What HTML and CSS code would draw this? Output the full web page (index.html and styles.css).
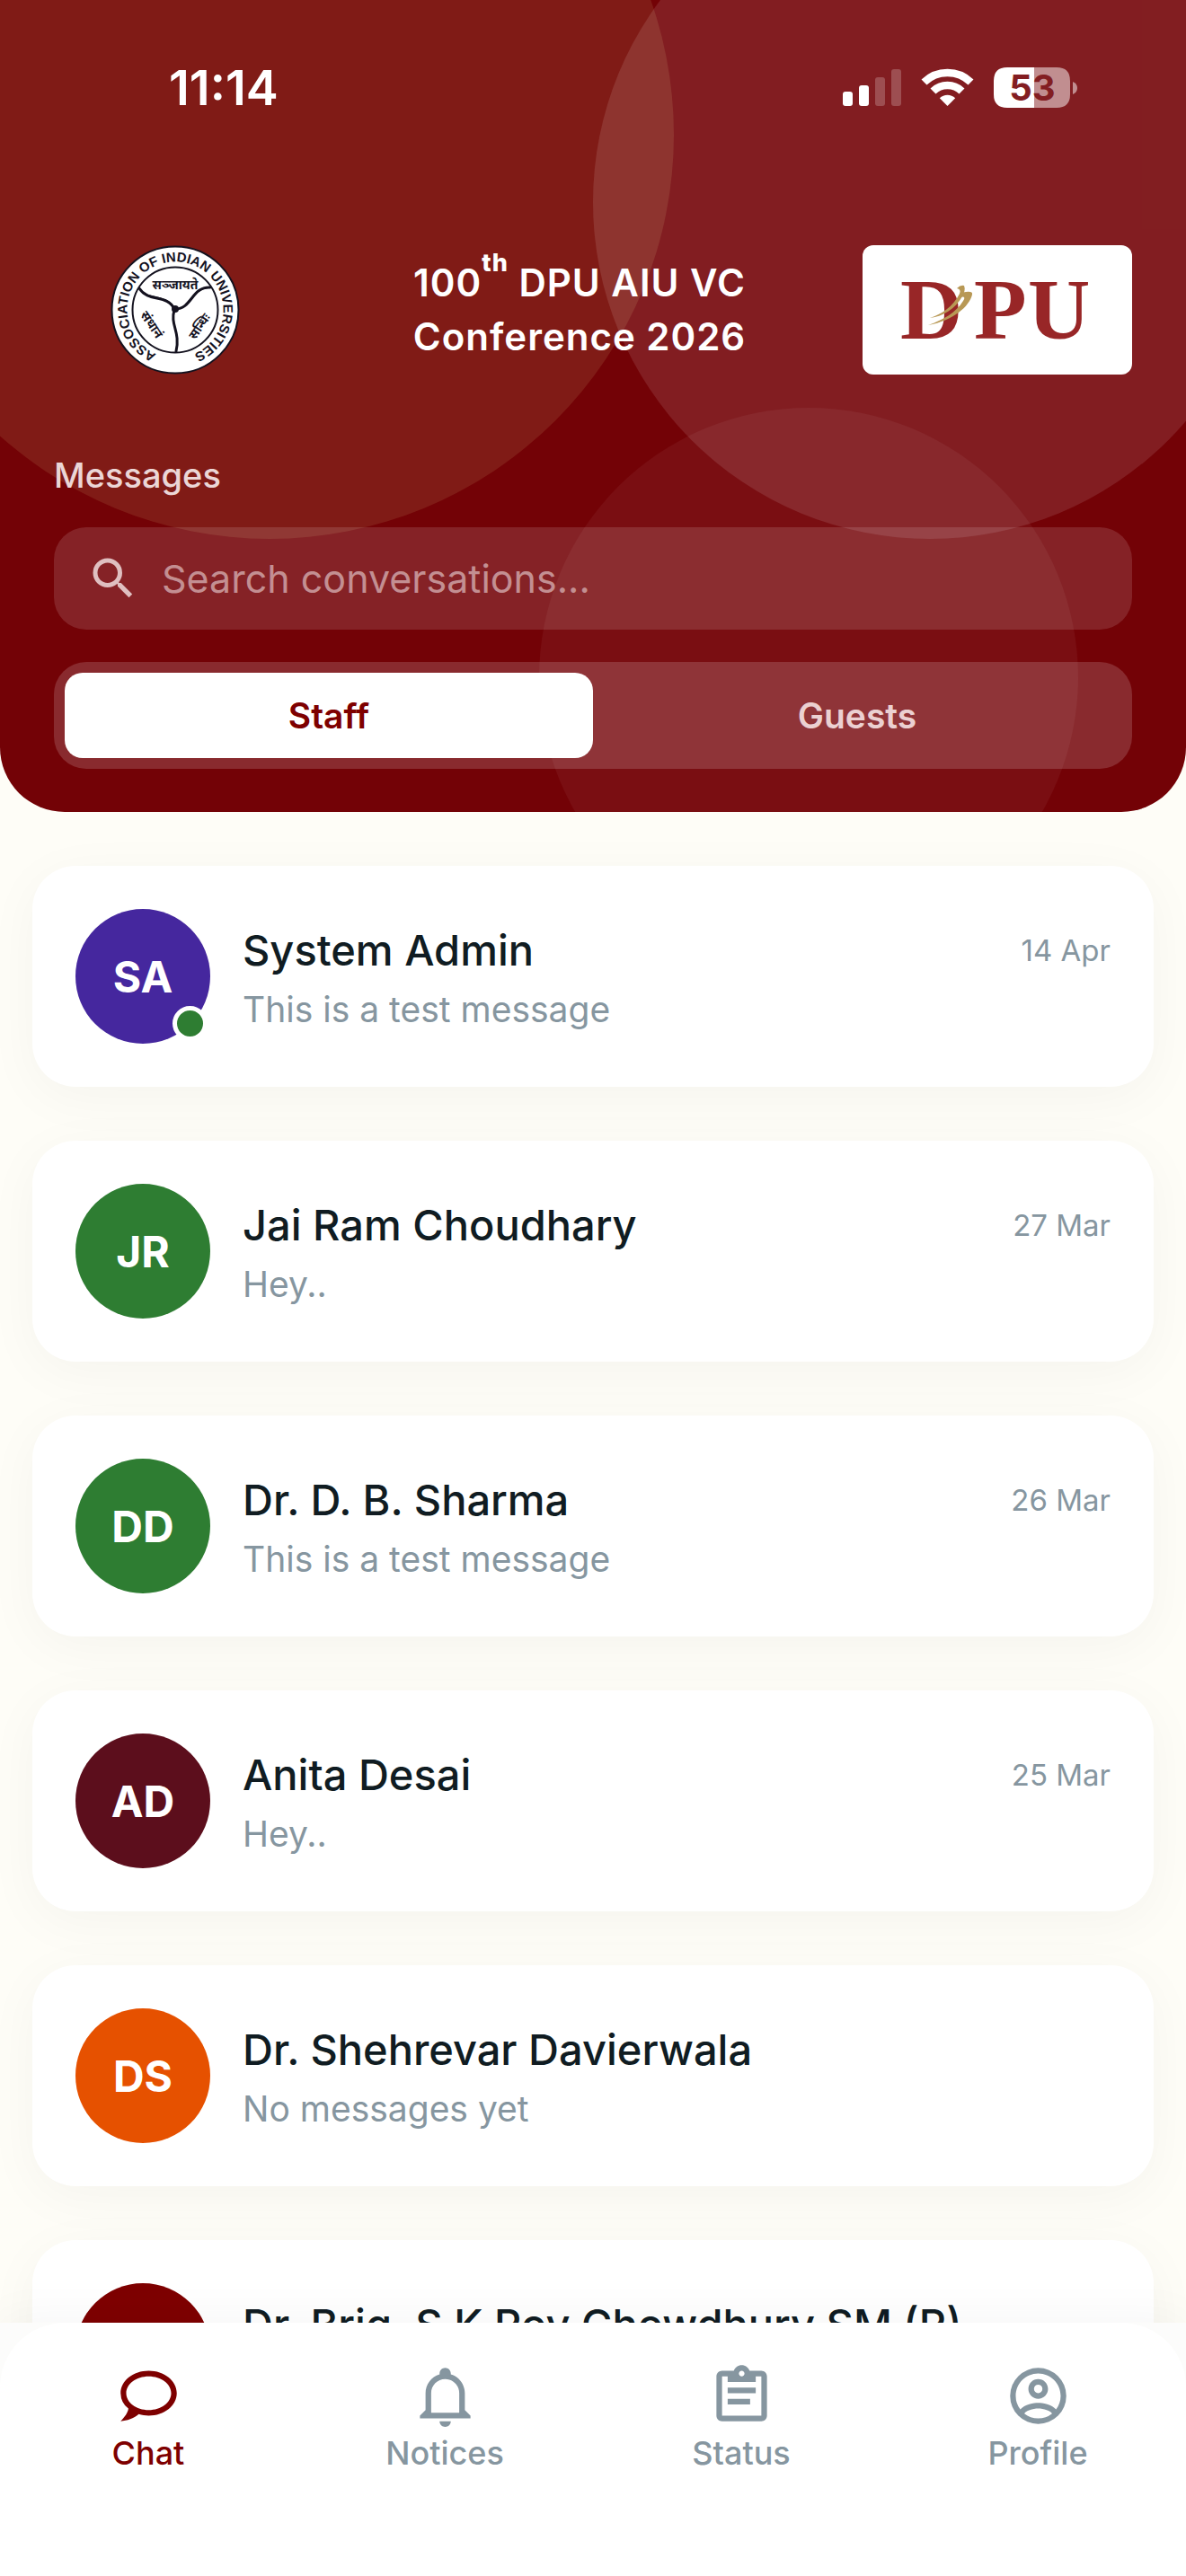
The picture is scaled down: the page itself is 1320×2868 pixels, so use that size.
FILE: index.html
```
<!DOCTYPE html>
<html lang="en">

<head>
    <meta charset="UTF-8">
    <meta name="viewport" content="width=device-width, initial-scale=1.0">
    <title>Messages</title>
    <link rel="stylesheet" href="styles.css">
</head>

<body>
    <header class="header">
        <div class="circle circle-left"></div>
        <div class="circle circle-right"></div>
        <div class="circle circle-bottom"></div>

        <div class="status-bar">
            <span class="time">11:14</span>
            <svg class="status-icons" width="262" height="46" viewBox="0 0 262 46" aria-hidden="true">
                <g fill="#fff">
                    <rect x="0" y="27" width="11" height="16" rx="3" />
                    <rect x="18" y="20" width="11" height="23" rx="3" />
                    <rect x="36" y="11" width="11" height="32" rx="3" opacity=".22" />
                    <rect x="54" y="2" width="11" height="41" rx="3" opacity=".22" />
                </g>
                <g fill="none" stroke="#fff" stroke-width="8.6">
                    <path d="M90.500 16.500a37.500 37.500 0 0 1 52 0" />
                    <path d="M100.500 26.500a23 23 0 0 1 32 0" />
                </g>
                <path d="M107.800 34.200a12.500 12.500 0 0 1 17.400 0L116.500 43z" fill="#fff" />
                <path d="M183 0h30v45h-30q-15 0-15-15V15q0-15 15-15z" fill="#fff" />
                <path d="M213 0h25q15 0 15 15v15q0 15-15 15h-25z" fill="#fff" opacity=".5" />
                <path d="M256 16q5 2 5 7t-5 7z" fill="#fff" opacity=".5" />
                <text class="battery-text" x="211" y="37" text-anchor="middle">53</text>
            </svg>
        </div>

        <div class="brand">
            <div class="brand-left">
                <svg class="emblem" viewBox="0 0 144 144" role="img" aria-label="Association of Indian Universities">
                    <circle cx="72" cy="72" r="70.500" fill="#fff" stroke="#14121f" stroke-width="2" />
                    <circle cx="72" cy="72" r="47.500" fill="none" stroke="#14121f" stroke-width="2" />
                    <path id="ring-path" d="M58 123.500A53.500 53.500 0 1 1 86 123.500" fill="none" />
                    <text class="ring-text"><textPath href="#ring-path" startOffset="50%" text-anchor="middle">ASSOCIATION OF INDIAN UNIVERSITIES</textPath></text>
                    <g class="motto" text-anchor="middle">
                        <text x="72" y="49">सञ्जायते</text>
                        <text transform="translate(42 91) rotate(56)">संधानं</text>
                        <text transform="translate(103 93) rotate(-56)">सन्धिः</text>
                    </g>
                    <g fill="none" stroke="#14121f" stroke-linecap="round">
                        <path d="M32 48C42 64 63 54 71 71" stroke-width="3" />
                        <path d="M36 53C46 60 63 56 71 71" stroke-width="2" />
                        <path d="M72 71C91 71 90 46 111 47" stroke-width="3" />
                        <path d="M84 66C93 57 97 48 108 47" stroke-width="2" />
                        <path d="M71 72C66 89 78 96 73 118" stroke-width="3" />
                    </g>
                    <circle cx="72" cy="71" r="4" fill="#14121f" />
                </svg>
            </div>
            <h1 class="title">100<sup>th</sup> DPU AIU VC<br>Conference 2026</h1>
            <div class="brand-right">
                <svg width="300" height="144" viewBox="0 0 300 144" role="img" aria-label="DPU">
                    <text class="dpu-text" x="42 124 184" y="104">DPU</text>
                    <g fill="#b89855">
                        <path d="M75 81C88 77 101 68 108 54Q110 49 105 48Q109 44 113 45Q115 50 111 57C103 71 90 79 75 81z" />
                        <path d="M73 89C90 83 104 75 112 62Q116 56 108 58Q108 52 115 52Q123 51 122 55C119 68 101 84 73 89z" />
                    </g>
                </svg>
            </div>
        </div>

        <p class="section-name">Messages</p>

        <label class="search">
            <svg width="60" height="60" viewBox="0 0 24 24" aria-hidden="true">
                <path d="M15.500 14h-.79l-.28-.27A6.470 6.470 0 0 0 16 9.500 6.500 6.500 0 1 0 9.500 16c1.610 0 3.090-.59 4.230-1.570l.27.28v.79l5 4.990L20.490 19l-4.990-5zm-6 0C7.010 14 5 11.990 5 9.500S7.010 5 9.500 5 14 7.010 14 9.500 11.990 14 9.500 14z" />
            </svg>
            <input type="search" placeholder="Search conversations..." aria-label="Search conversations">
        </label>

        <div class="tabs">
            <button class="tab active" type="button">Staff</button>
            <button class="tab" type="button">Guests</button>
        </div>
    </header>

    <main class="list">
        <a class="card" href="#">
            <span class="avatar purple">SA<span class="online"></span></span>
            <div class="info">
                <div class="row">
                    <h2>System Admin</h2>
                    <time>14 Apr</time>
                </div>
                <p>This is a test message</p>
            </div>
        </a>
        <a class="card" href="#">
            <span class="avatar green">JR</span>
            <div class="info">
                <div class="row">
                    <h2>Jai Ram Choudhary</h2>
                    <time>27 Mar</time>
                </div>
                <p>Hey..</p>
            </div>
        </a>
        <a class="card" href="#">
            <span class="avatar green">DD</span>
            <div class="info">
                <div class="row">
                    <h2>Dr. D. B. Sharma</h2>
                    <time>26 Mar</time>
                </div>
                <p>This is a test message</p>
            </div>
        </a>
        <a class="card" href="#">
            <span class="avatar wine">AD</span>
            <div class="info">
                <div class="row">
                    <h2>Anita Desai</h2>
                    <time>25 Mar</time>
                </div>
                <p>Hey..</p>
            </div>
        </a>
        <a class="card" href="#">
            <span class="avatar orange">DS</span>
            <div class="info">
                <div class="row">
                    <h2>Dr. Shehrevar Davierwala</h2>
                </div>
                <p>No messages yet</p>
            </div>
        </a>
        <a class="card" href="#">
            <span class="avatar red"></span>
            <div class="info">
                <div class="row">
                    <h2>Dr. Brig. S K Roy Chowdhury SM (R)</h2>
                </div>
            </div>
        </a>
    </main>

    <div class="nav-wrap">
        <nav class="nav">
            <a class="nav-item active" href="#">
                <svg viewBox="0 0 24 24" aria-hidden="true">
                    <path d="M12 3C6.500 3 2 6.580 2 11a7.220 7.220 0 0 0 2.750 5.500c0 .6-.42 2.170-2.750 4.500 2.370-.11 4.640-1 6.470-2.500 1.140.33 2.340.5 3.530.5 5.500 0 10-3.580 10-8s-4.500-8-10-8m0 14c-4.420 0-8-2.690-8-6s3.580-6 8-6 8 2.690 8 6-3.580 6-8 6z" />
                </svg>
                <span>Chat</span>
            </a>
            <a class="nav-item" href="#">
                <svg viewBox="0 0 24 24" aria-hidden="true">
                    <path d="M10 21h4c0 1.100-.9 2-2 2s-2-.9-2-2m11-2v1H3v-1l2-2v-6c0-3.100 2.030-5.830 5-6.710V4c0-1.100.9-2 2-2s2 .9 2 2v.29c2.970.88 5 3.610 5 6.710v6l2 2m-4-8c0-2.760-2.240-5-5-5s-5 2.240-5 5v7h10v-7z" />
                </svg>
                <span>Notices</span>
            </a>
            <a class="nav-item" href="#">
                <svg viewBox="0 0 24 24" aria-hidden="true">
                    <path d="M19 3h-4.180C14.400 1.840 13.300 1 12 1s-2.400.84-2.820 2H5c-1.100 0-2 .9-2 2v14c0 1.100.9 2 2 2h14c1.100 0 2-.9 2-2V5c0-1.100-.9-2-2-2m-7 0c.55 0 1 .45 1 1s-.45 1-1 1-1-.45-1-1 .45-1 1-1M7 7h10V5h2v14H5V5h2v2m10 4H7V9h10v2m-2 4H7v-2h8v2z" />
                </svg>
                <span>Status</span>
            </a>
            <a class="nav-item" href="#">
                <svg viewBox="0 0 24 24" aria-hidden="true">
                    <path d="M12 2A10 10 0 0 0 2 12a10 10 0 0 0 10 10 10 10 0 0 0 10-10A10 10 0 0 0 12 2M7.070 18.280c.43-.9 3.050-1.780 4.930-1.780s4.500.88 4.930 1.780A7.893 7.893 0 0 1 12 20c-1.860 0-3.570-.64-4.930-1.720m11.290-1.450c-1.430-1.740-4.900-2.330-6.360-2.330s-4.930.59-6.360 2.330A7.928 7.928 0 0 1 4 12c0-4.410 3.590-8 8-8s8 3.590 8 8c0 1.820-.62 3.500-1.640 4.830M12 6c-1.940 0-3.500 1.560-3.500 3.500S10.060 13 12 13s3.500-1.560 3.500-3.500S13.940 6 12 6m0 5a1.500 1.500 0 0 1-1.500-1.500A1.500 1.500 0 0 1 12 8a1.500 1.500 0 0 1 1.500 1.500A1.500 1.500 0 0 1 12 11z" />
                </svg>
                <span>Profile</span>
            </a>
        </nav>
    </div>
</body>

</html>
```

FILE: styles.css
```
* {
    box-sizing: border-box;
}

body {
    display: flex;
    flex-direction: column;
    height: 100vh;
    margin: 0;
    background: #fefdf7;
    color: #101c22;
    font-family: Inter, "Liberation Sans", sans-serif;
}

h1,
h2,
p {
    margin: 0;
}

a {
    color: inherit;
    text-decoration: none;
}

/* header */
.header {
    position: relative;
    flex: none;
    overflow: hidden;
    padding: 72px 60px 48px;
    border-radius: 0 0 72px 72px;
    background: #730206;
}

.header > div,
.header > p,
.header > label {
    position: relative;
}

.header > .circle {
    position: absolute;
    border-radius: 50%;
}

.circle-left {
    top: -300px;
    left: -150px;
    width: 900px;
    height: 900px;
    background: rgba(208, 175, 113, 0.15);
}

.circle-right {
    top: -150px;
    right: -90px;
    width: 750px;
    height: 750px;
    background: rgba(255, 255, 255, 0.11);
}

.circle-bottom {
    top: 454px;
    right: 120px;
    width: 600px;
    height: 600px;
    background: rgba(255, 255, 255, 0.05);
}

.status-bar {
    display: flex;
    justify-content: space-between;
    align-items: center;
    padding: 0 60px 0 128px;
}

.time {
    color: #fff;
    font-size: 54px;
    font-weight: 600;
    line-height: 52px;
}

.battery-text {
    fill: #831e22;
    font-size: 40px;
    font-weight: 700;
}

.brand {
    display: flex;
    align-items: center;
    margin-top: 149px;
}

.brand-left {
    display: flex;
    flex: none;
    justify-content: center;
    width: 270px;
}

.emblem {
    width: 144px;
    height: 144px;
}

.ring-text {
    fill: #14121f;
    font-size: 15px;
    font-weight: 700;
    font-family: "Liberation Sans", sans-serif;
}

.motto {
    fill: #14121f;
    font-size: 14px;
    font-weight: 700;
    font-family: "Noto Sans", sans-serif;
}

.title {
    flex: 1;
    color: #fff;
    font-size: 42px;
    font-weight: 600;
    letter-spacing: 1px;
    line-height: 60px;
    text-align: center;
}

.title sup {
    font-size: 27px;
    font-weight: 800;
    line-height: 0;
    vertical-align: 28px;
}

.brand-right {
    display: flex;
    flex: none;
    border-radius: 12px;
    background: #fff;
}

.dpu-text {
    fill: #982627;
    font-family: "Liberation Serif", serif;
    font-size: 96px;
    font-weight: 700;
}

.section-name {
    margin-top: 88px;
    color: #ebd6d6;
    font-size: 38px;
    font-weight: 500;
    line-height: 48px;
}

.search {
    display: flex;
    align-items: center;
    gap: 24px;
    height: 114px;
    margin-top: 34px;
    padding: 0 36px;
    border-radius: 36px;
    background: rgba(255, 255, 255, 0.13);
}

.search svg {
    flex: none;
    fill: #dfbfc0;
}

.search input {
    flex: 1;
    min-width: 0;
    padding: 0;
    border: none;
    outline: none;
    background: transparent;
    color: #fff;
    font: 400 43px Inter, "Liberation Sans", sans-serif;
}

.search input::placeholder {
    color: #c38f92;
    opacity: 1;
}

.tabs {
    display: flex;
    margin-top: 36px;
    padding: 12px;
    border-radius: 36px;
    background: rgba(255, 255, 255, 0.16);
}

.tab {
    flex: 1;
    height: 95px;
    padding: 0;
    border: none;
    border-radius: 20px;
    background: transparent;
    color: #ebd0d1;
    font: 600 39px Inter, "Liberation Sans", sans-serif;
    cursor: pointer;
}

.tab.active {
    background: #fff;
    color: #7e0000;
}

/* conversations */
.list {
    display: flex;
    flex: 1;
    flex-direction: column;
    gap: 60px;
    min-height: 0;
    overflow: hidden;
    padding: 60px 36px;
}

.card {
    display: flex;
    flex: none;
    align-items: center;
    gap: 36px;
    padding: 48px;
    border-radius: 48px;
    background: #fff;
    box-shadow: 0 12px 60px rgba(0, 0, 0, 0.04);
}

.avatar {
    position: relative;
    display: flex;
    flex: none;
    align-items: center;
    justify-content: center;
    width: 150px;
    height: 150px;
    border-radius: 50%;
    color: #fff;
    font-size: 48px;
    font-weight: 700;
}

.purple {
    background: #45279e;
}

.green {
    background: #2e7d32;
}

.wine {
    background: #5c0e1c;
}

.orange {
    background: #e65100;
}

.red {
    background: #7e0000;
}

.online {
    position: absolute;
    right: 3px;
    bottom: 3px;
    width: 39px;
    height: 39px;
    border: 5px solid #fff;
    border-radius: 50%;
    background: #2e7d32;
}

.info {
    flex: 1;
    align-self: flex-start;
    min-width: 0;
    padding-top: 16px;
}

.row {
    display: flex;
    justify-content: space-between;
    align-items: center;
}

.row h2 {
    font-size: 47px;
    font-weight: 500;
    line-height: 60px;
}

.row time {
    color: #8696a0;
    font-size: 33px;
}

.info p {
    margin-top: 12px;
    color: #8696a0;
    font-size: 39px;
    line-height: 48px;
}

/* bottom navigation */
.nav-wrap {
    position: relative;
    flex: none;
    background: #fcfcfb;
    box-shadow: 0 -6px 48px rgba(0, 0, 0, 0.04);
}

.nav {
    display: flex;
    padding: 44px 0 116px;
    border-radius: 72px 72px 0 0;
    background: #fff;
}

.nav-item {
    display: flex;
    flex: 1;
    flex-direction: column;
    align-items: center;
    gap: 6px;
    color: #8696a0;
    font-size: 36px;
    font-weight: 500;
    line-height: 41px;
}

.nav-item svg {
    width: 75px;
    height: 75px;
    fill: currentColor;
}

.nav-item.active {
    color: #7e0000;
}
```
